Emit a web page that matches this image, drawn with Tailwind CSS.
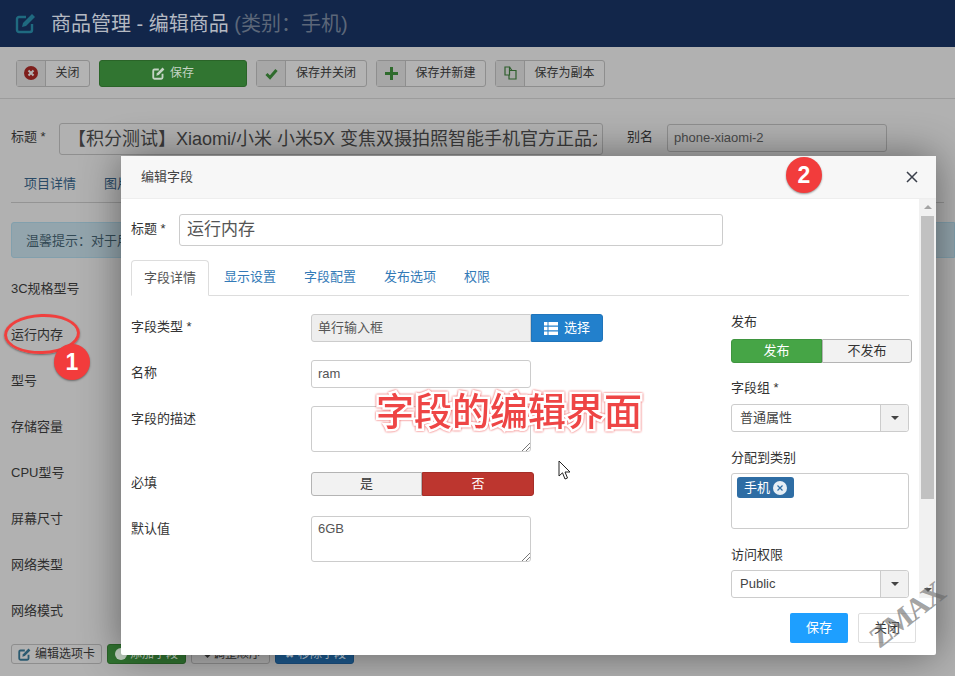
<!DOCTYPE html>
<html lang="zh-CN">
<head>
  <meta charset="UTF-8" />
  <title>商品管理 - 编辑商品</title>
  <script src="https://cdn.jsdelivr.net/npm/@tailwindcss/browser@4"></script>
</head>
<body class="relative w-[955px] h-[676px] overflow-hidden bg-[#b1b1b1] text-[13px] text-[#2e2e2e] font-['Liberation_Sans','Noto_Sans_CJK_SC',sans-serif]">

  <!-- page header -->
  <header class="h-[47px] bg-[#12264a] flex items-center pl-[15px]">
    <svg class="w-[21px] h-[21px] text-[#1f6a80]" viewBox="0 0 21 21" fill="none" stroke="currentColor" stroke-width="2.4"><path d="M17 11v6a2 2 0 0 1-2 2H4a2 2 0 0 1-2-2V6a2 2 0 0 1 2-2h7"/><path d="M8 10l9-9 3 3-9 9-4 1z" fill="currentColor" stroke="none"/></svg>
    <h1 class="ml-[15px] text-[20px] text-[#b4b9c2]">商品管理 - 编辑商品 <span class="text-[#5c6779]">(类别<span class="font-['Noto_Sans_CJK_TC',sans-serif]">：</span>手机)</span></h1>
  </header>

  <!-- toolbar -->
  <div class="h-[52px] border-b border-[#9c9c9c] flex items-center pl-4 gap-[9px] pt-px text-[12px]">
    <button class="h-[27px] w-[74px] flex border border-[#8e8e8e] rounded-[3px] bg-[#b3b3b3]">
      <span class="w-[29px] h-full flex items-center justify-center bg-[#a7a7a7] border-r border-[#8e8e8e]"><svg class="w-[14px] h-[14px]" viewBox="0 0 14 14"><circle cx="7" cy="7" r="7" fill="#7e1f1c"/><path d="M4.5 4.5l5 5m0-5l-5 5" stroke="#b3b3b3" stroke-width="2"/></svg></span>
      <span class="flex-1 leading-[25px]">关闭</span>
    </button>
    <button class="h-[27px] w-[148px] flex items-center justify-center gap-[5px] border border-[#2a6428] rounded-[3px] bg-[#317531] text-[#c4d4c4]">
      <svg class="w-[13px] h-[13px]" viewBox="0 0 21 21" fill="none" stroke="currentColor" stroke-width="3"><path d="M17 11v6a2 2 0 0 1-2 2H4a2 2 0 0 1-2-2V6a2 2 0 0 1 2-2h7"/><path d="M8 10l9-9 3 3-9 9-4 1z" fill="currentColor" stroke="none"/></svg>
      <span>保存</span>
    </button>
    <button class="h-[27px] w-[111px] flex border border-[#8e8e8e] rounded-[3px] bg-[#b3b3b3]">
      <span class="w-[29px] h-full flex items-center justify-center bg-[#a7a7a7] border-r border-[#8e8e8e]"><svg class="w-[13px] h-[13px] text-[#2f6b2d]" viewBox="0 0 13 13" fill="none" stroke="currentColor" stroke-width="3"><path d="M1.5 7l3.5 3.5 6.5-7.5"/></svg></span>
      <span class="flex-1 leading-[25px]">保存并关闭</span>
    </button>
    <button class="h-[27px] w-[110px] flex border border-[#8e8e8e] rounded-[3px] bg-[#b3b3b3]">
      <span class="w-[29px] h-full flex items-center justify-center bg-[#a7a7a7] border-r border-[#8e8e8e]"><svg class="w-[13px] h-[13px] text-[#2f6b2d]" viewBox="0 0 13 13" fill="currentColor"><path d="M5 0h3v5h5v3H8v5H5V8H0V5h5z"/></svg></span>
      <span class="flex-1 leading-[25px]">保存并新建</span>
    </button>
    <button class="h-[27px] w-[110px] flex border border-[#8e8e8e] rounded-[3px] bg-[#b3b3b3]">
      <span class="w-[29px] h-full flex items-center justify-center bg-[#a7a7a7] border-r border-[#8e8e8e]"><svg class="w-[13px] h-[14px] text-[#2f5f2d]" viewBox="0 0 13 14" fill="none" stroke="currentColor" stroke-width="1.2"><path d="M1 1h4.5v8H1z"/><path d="M5.5 1l2.5 3.5M6 4.5h6v8.5H5V9"/></svg></span>
      <span class="flex-1 leading-[25px]">保存为副本</span>
    </button>
  </div>

  <!-- title row -->
  <div class="mt-6 flex items-start pl-[11px]">
    <label class="w-[48px] pt-[4px]">标题 *</label>
    <div class="w-[544px] h-8 border border-[#8f8f8f] rounded-[3px] pl-2 pr-[5px] text-[18px] leading-[30px] text-[#3a3a3a]"><div class="overflow-hidden whitespace-nowrap">【积分测试】Xiaomi/小米 小米5X 变焦双摄拍照智能手机官方正品大</div></div>
    <label class="ml-6 w-[40px] pt-[4px]">别名</label>
    <div class="w-[220px] h-[28px] mt-px border border-[#8f8f8f] rounded-[3px] pl-[6px] leading-[26px] text-[#4a4a4a]">phone-xiaomi-2</div>
  </div>

  <!-- page tabs -->
  <div class="mt-[14px] mx-[11px] h-[34px] border-b border-[#949494] flex gap-[28px] pl-[13px] pt-[5px] text-[#2a4a66]">
    <span>项目详情</span><span>图片</span>
  </div>

  <div class="mt-[19px] ml-[11px] h-9 bg-[#93a5ad] border border-[#82a0ad] rounded-l-[3px] pl-[14px] leading-[34px] text-[#334a55]">温馨提示<span class="font-['Noto_Sans_CJK_TC',sans-serif]">：</span>对于用户</div>

  <!-- spec rows behind the dialog -->
  <ul class="mt-2 pl-[11px]">
    <li class="h-[46px] leading-[46px]">3C规格型号</li>
    <li class="h-[46px] leading-[46px]">运行内存</li>
    <li class="h-[46px] leading-[46px]">型号</li>
    <li class="h-[46px] leading-[46px]">存储容量</li>
    <li class="h-[46px] leading-[46px]">CPU型号</li>
    <li class="h-[46px] leading-[46px]">屏幕尺寸</li>
    <li class="h-[46px] leading-[46px]">网络类型</li>
    <li class="h-[46px] leading-[46px]">网络模式</li>
  </ul>

  <div class="mt-[10px] pl-[11px] flex gap-[5px] text-[12px]">
    <button class="h-5 w-[91px] flex items-center justify-center gap-1 border border-[#8e8e8e] rounded-[3px]"><svg class="w-[13px] h-[13px] text-[#2a5a70]" viewBox="0 0 21 21" fill="none" stroke="currentColor" stroke-width="3"><path d="M17 11v6a2 2 0 0 1-2 2H4a2 2 0 0 1-2-2V6a2 2 0 0 1 2-2h7"/><path d="M8 10l9-9 3 3-9 9-4 1z" fill="currentColor" stroke="none"/></svg>编辑选项卡</button>
    <button class="h-5 w-[79px] flex items-center pl-[7px] gap-[3px] bg-[#317531] border border-[#2a6428] rounded-[3px] text-[#c4d4c4]"><span class="w-3 h-3 rounded-full bg-[#c4d4c4]"></span>添加字段</button>
    <button class="h-5 w-[79px] flex items-center pl-[13px] gap-[3px] border border-[#8e8e8e] rounded-[3px]"><span class="w-[5px] h-[5px] rotate-45 bg-[#333]"></span>调整顺序</button>
    <button class="h-5 w-[79px] flex items-center pl-[7px] gap-[3px] bg-[#1d5a8f] border border-[#1a5080] rounded-[3px] text-[#c0cfdc]"><span class="w-3 text-[11px] leading-3">✖</span>移除字段</button>
  </div>

  <!-- dialog -->
  <div class="absolute left-[121px] top-[156px] w-[815px] h-[499px] bg-white rounded-[2px] shadow-[0_0_40px_rgba(0,0,0,0.45)] flex flex-col text-[#333]">
    <div class="h-[43px] shrink-0 bg-[#f7f7f7] border-b border-[#eeeeee] flex items-center justify-between pl-5 pr-[18px]">
      <span class="text-[13px] text-[#444] -mt-[1px]">编辑字段</span>
      <svg class="w-[12px] h-[12px] text-[#3a3f4a]" viewBox="0 0 12 12" fill="none" stroke="currentColor" stroke-width="1.5"><path d="M1 1l10 10M11 1L1 11"/></svg>
    </div>

    <div class="h-[399px] shrink-0 flex">
      <div class="flex-1 overflow-hidden pl-[10px] pt-[15px]">
        <div class="flex items-start">
          <label class="w-[48px] pt-[5px]">标题 *</label>
          <div class="w-[544px] h-8 border border-[#cccccc] rounded-[3px] pl-[7px] text-[17px] leading-[30px] text-[#555]">运行内存</div>
        </div>

        <div class="mt-[14px] w-[778px] h-9 border-b border-[#dddddd] flex text-[#337ab7]">
          <span class="w-[78px] h-9 border border-[#dddddd] border-b-white rounded-t-[4px] bg-white text-center leading-[34px] text-[#555]">字段详情</span>
          <span class="ml-[15px] w-[52px] leading-[34px]">显示设置</span>
          <span class="ml-7 w-[52px] leading-[34px]">字段配置</span>
          <span class="ml-7 w-[52px] leading-[34px]">发布选项</span>
          <span class="ml-7 leading-[34px]">权限</span>
        </div>

        <div class="mt-[18px] flex">
          <!-- left column -->
          <div class="w-[600px]">
            <div class="flex mb-[18px]">
              <label class="w-[180px] pt-[4px] leading-[18px]">字段类型 *</label>
              <div class="w-[220px] h-7 bg-[#eeeeee] border border-[#cccccc] rounded-l-[3px] pl-[6px] leading-[26px] text-[#555]">单行输入框</div>
              <button class="w-[72px] h-7 bg-[#2280cc] border border-[#1f74ba] rounded-r-[3px] text-white flex items-center justify-center gap-[6px]">
                <svg class="w-[14px] h-[13px]" viewBox="0 0 14 13" fill="currentColor"><path d="M0 0h3.5v3.5H0zM4.5 0H14v3.5H4.5zM0 4.75h3.5v3.5H0zM4.5 4.75H14v3.5H4.5zM0 9.5h3.5V13H0zM4.5 9.5H14V13H4.5z"/></svg>
                选择
              </button>
            </div>
            <div class="flex mb-[18px]">
              <label class="w-[180px] pt-[4px] leading-[18px]">名称</label>
              <div class="w-[220px] h-7 border border-[#cccccc] rounded-[3px] pl-[6px] leading-[26px] text-[#555]">ram</div>
            </div>
            <div class="flex mb-5">
              <label class="w-[180px] pt-[4px] leading-[18px]">字段的描述</label>
              <div class="relative w-[220px] h-[46px] border border-[#cccccc] rounded-[3px]">
                <svg class="absolute right-0 bottom-0 w-[9px] h-[9px] text-[#777]" viewBox="0 0 9 9" stroke="currentColor"><path d="M1 9l8-8M5 9l4-4"/></svg>
              </div>
            </div>
            <div class="flex mb-5">
              <label class="w-[180px] pt-[2px] leading-[18px]">必填</label>
              <div class="w-[223px] h-6 flex leading-[22px] text-center">
                <span class="w-[111px] bg-[#f2f2f2] border border-[#b4b4b4] rounded-l-[3px] text-[#333]">是</span>
                <span class="w-[112px] bg-[#bd362f] border border-[#a52e28] rounded-r-[3px] text-white">否</span>
              </div>
            </div>
            <div class="flex">
              <label class="w-[180px] pt-[4px] leading-[18px]">默认值</label>
              <div class="relative w-[220px] h-[46px] border border-[#cccccc] rounded-[3px] pl-[6px] pt-[3px] leading-[18px] text-[#555]">6GB
                <svg class="absolute right-0 bottom-0 w-[9px] h-[9px] text-[#777]" viewBox="0 0 9 9" stroke="currentColor"><path d="M1 9l8-8M5 9l4-4"/></svg>
              </div>
            </div>
          </div>

          <!-- right column -->
          <div class="w-[181px]">
            <label class="block leading-4 mb-[9px]">发布</label>
            <div class="h-6 flex leading-[22px] text-center">
              <span class="w-[91px] bg-[#46a546] border border-[#3f953f] rounded-l-[3px] text-white">发布</span>
              <span class="w-[90px] bg-[#f2f2f2] border border-[#b4b4b4] rounded-r-[3px] text-[#333]">不发布</span>
            </div>

            <label class="block leading-4 mt-[17px] mb-2">字段组 *</label>
            <div class="w-[178px] h-7 flex border border-[#cccccc] rounded-[3px]">
              <span class="flex-1 pl-2 leading-[26px] text-[#444]">普通属性</span>
              <span class="w-7 bg-[#f1f1f1] border-l border-[#cccccc] rounded-r-[3px] flex items-center justify-center"><span class="border-x-4 border-x-transparent border-t-4 border-t-[#444]"></span></span>
            </div>

            <label class="block leading-4 mt-[18px] mb-[7px]">分配到类别</label>
            <div class="w-[178px] h-14 border border-[#cccccc] rounded-[3px] pl-[5px] pt-[3px]">
              <span class="inline-flex items-center gap-[3px] h-[21px] px-[7px] bg-[#2e6da4] rounded-[3px] text-white">手机
                <svg class="w-[14px] h-[14px]" viewBox="0 0 14 14"><circle cx="7" cy="7" r="7" fill="#e6eef5"/><path d="M4.5 4.5l5 5m0-5l-5 5" stroke="#2e6da4" stroke-width="1.2"/></svg>
              </span>
            </div>

            <label class="block leading-4 mt-[18px] mb-[7px]">访问权限</label>
            <div class="w-[178px] h-7 flex border border-[#cccccc] rounded-[3px]">
              <span class="flex-1 pl-2 leading-[26px] text-[#444]">Public</span>
              <span class="w-7 bg-[#f1f1f1] border-l border-[#cccccc] rounded-r-[3px] flex items-center justify-center"><span class="border-x-4 border-x-transparent border-t-4 border-t-[#444]"></span></span>
            </div>
          </div>
        </div>
      </div>

      <!-- scrollbar -->
      <div class="w-[17px] shrink-0 bg-[#f1f1f1] flex flex-col items-center pt-[6px]">
        <span class="border-x-4 border-x-transparent border-b-4 border-b-[#a3a3a3]"></span>
        <span class="mt-[7px] w-[13px] h-[283px] bg-[#c1c1c1]"></span>
        <span class="mt-auto mb-[6px] border-x-4 border-x-transparent border-t-4 border-t-[#505050]"></span>
      </div>
    </div>

    <div class="flex-1 flex justify-end items-start gap-[10px] pr-5 pt-[15px]">
      <button class="w-[58px] h-[30px] bg-[#1e9fff] rounded-[2px] text-white">保存</button>
      <button class="w-[58px] h-[30px] bg-white border border-[#dedede] rounded-[2px] text-[#333]">关闭</button>
    </div>
  </div>

  <!-- annotations drawn over the screenshot -->
  <div class="absolute left-[4px] top-[314px] w-[76px] h-[40px] -rotate-2 border-[3px] border-[#f0403e] rounded-[50%] shadow-[0_1px_2px_rgba(0,0,0,0.4)]"></div>
  <div class="absolute left-[54px] top-[344px] w-9 h-9 rounded-full bg-[#f23c3c] shadow-[0_1px_2px_rgba(0,0,0,0.4)] text-white text-[23px] font-bold leading-9 text-center">1</div>
  <div class="absolute left-[786px] top-[157px] w-9 h-9 rounded-full bg-[#f23c3c] shadow-[0_1px_2px_rgba(0,0,0,0.4)] text-white text-[23px] font-bold leading-9 text-center">2</div>
  <div class="absolute left-[376px] top-[381px] text-[38px] leading-[56px] whitespace-nowrap font-['Noto_Sans_CJK_SC',sans-serif] font-medium text-[#ee4545] [-webkit-text-stroke:5px_#ffffff] [paint-order:stroke_fill] [filter:drop-shadow(0_0_1px_#ee4545)]">字段的编辑界面</div>
  <svg class="absolute left-[558px] top-[460px] w-[13px] h-[20px]" viewBox="0 0 13 20"><path d="M1 1v15l3.5-3.2L7 19l2.5-1-2.5-6h5z" fill="#fff" stroke="#222" stroke-width="1"/></svg>
  <div class="absolute left-[864px] top-[600px] -rotate-[38deg] font-['Liberation_Serif',serif] font-bold text-[30px] leading-[30px] tracking-tighter text-[#666]/60">ZMAX</div>
</body>
</html>
